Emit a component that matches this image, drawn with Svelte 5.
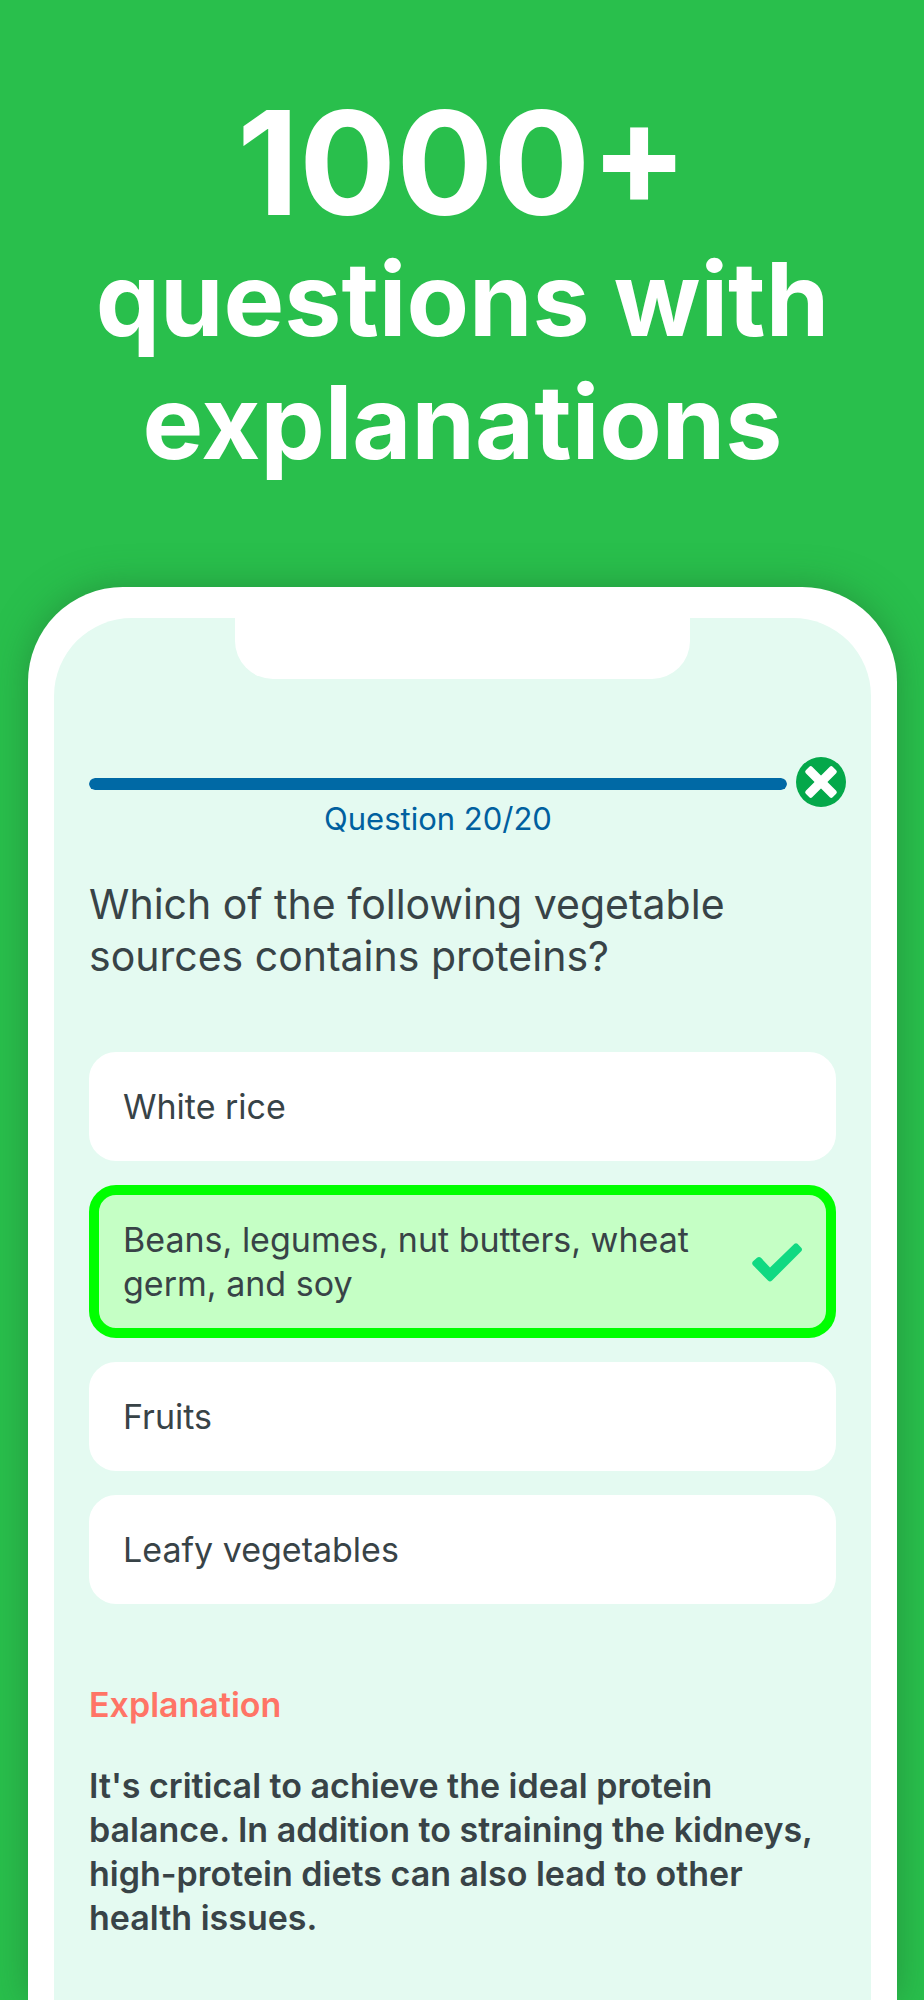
<script>
  const total = 20;
  const current = 20;
  const options = [
    { text: 'White rice', correct: false },
    { text: 'Beans, legumes, nut butters, wheat germ, and soy', correct: true },
    { text: 'Fruits', correct: false },
    { text: 'Leafy vegetables', correct: false },
  ];
  let selected = $state(1);
</script>

<div class="page">
  <h1 class="headline">
    <span class="count">1000+</span>
    <span class="line">questions with</span>
    <span class="line">explanations</span>
  </h1>

  <div class="phone">
    <main class="screen">
      <div class="notch"></div>

      <div class="top">
        <div class="progress">
          <div
            class="track"
            role="progressbar"
            aria-labelledby="progress-label"
            aria-valuemin="0"
            aria-valuemax={total}
            aria-valuenow={current}
          >
            <div class="fill" style="width: {(current / total) * 100}%"></div>
          </div>
          <div class="progress-label" id="progress-label">Question {current}/{total}</div>
        </div>
        <button class="close" type="button" aria-label="Close">
          <svg viewBox="0 0 50 50" aria-hidden="true">
            <circle cx="25" cy="25" r="25" fill="#04a84a" />
            <g fill="#fff">
              <rect x="6" y="20.500" width="38" height="9" rx="2" transform="rotate(45 25 25)" />
              <rect x="6" y="20.500" width="38" height="9" rx="2" transform="rotate(-45 25 25)" />
            </g>
          </svg>
        </button>
      </div>

      <h2 class="question">Which of the following vegetable sources contains proteins?</h2>

      <div class="options">
        {#each options as option, i}
          <button
            type="button"
            class="option"
            class:correct={selected === i && option.correct}
            aria-pressed={selected === i}
            onclick={() => (selected = i)}
          >
            <span class="text">{option.text}</span>
            {#if selected === i && option.correct}
              <svg class="check" viewBox="0 0 50 39" aria-hidden="true">
                <path
                  d="M.8 18.500 L5 14.800 Q7 13.300 9 14.800 L18 24.500 L42.500 .8 Q44 -.3 45.500 .8 L49.500 5 Q50.500 6.500 49.500 8 L20 37.500 Q18 39.500 16 37.500 L.8 22 Q-.5 20.300 .8 18.500 Z"
                  fill="#10d982"
                />
              </svg>
            {/if}
          </button>
        {/each}
      </div>

      <section class="explanation">
        <h3>Explanation</h3>
        <p>
          It's critical to achieve the ideal protein balance. In addition to straining the kidneys,
          high-protein diets can also lead to other health issues.
        </p>
      </section>
    </main>
  </div>
</div>

<style>
  :global(body) {
    background: #29bf4c;
  }

  .page {
    box-sizing: border-box;
    min-height: 100vh;
    display: flex;
    flex-direction: column;
    padding: 88px 27px 0 28px;
    background: #29bf4c;
    color: #384347;
    font-family: Inter, 'Open Sans', sans-serif;
  }

  h1,
  h2,
  h3,
  p {
    margin: 0;
  }

  .headline {
    color: #fff;
    text-align: center;
    font-weight: 700;
  }

  .headline span {
    display: block;
  }

  .headline .count {
    font-size: 144px;
    line-height: 150px;
  }

  .headline .line {
    font-size: 102px;
    line-height: 123px;
  }

  .phone {
    flex: 1;
    display: flex;
    margin-top: 103px;
    padding: 31px 26px 0;
    background: #fff;
    border-radius: 95px 95px 0 0;
    box-shadow: 0 0 36px rgba(34, 110, 50, 0.5);
  }

  .screen {
    flex: 1;
    min-width: 0;
    padding: 0 35px 48px;
    background: #e4faf1;
    border-radius: 78px 78px 0 0;
  }

  .notch {
    width: 61%;
    height: 61px;
    margin: 0 auto;
    background: #fff;
    border-radius: 0 0 38px 38px;
  }

  .top {
    display: flex;
    align-items: flex-start;
    gap: 9px;
    margin: 78px -10px 0 0;
  }

  .progress {
    flex: 1;
    padding-top: 21px;
  }

  .track {
    height: 12px;
    border-radius: 6px;
    background: #c9e4ea;
    overflow: hidden;
  }

  .fill {
    height: 100%;
    border-radius: 6px;
    background: #0069a5;
  }

  .progress-label {
    margin-top: 9px;
    color: #00609f;
    font-size: 31px;
    line-height: 40px;
    text-align: center;
  }

  .close {
    width: 50px;
    height: 50px;
    padding: 0;
    border: 0;
    background: none;
    cursor: pointer;
  }

  .close svg {
    display: block;
  }

  .question {
    margin-top: 39px;
    font-size: 41px;
    font-weight: 400;
    line-height: 52px;
  }

  .options {
    display: flex;
    flex-direction: column;
    gap: 24px;
    margin-top: 70px;
  }

  .option {
    display: flex;
    align-items: center;
    justify-content: space-between;
    gap: 24px;
    padding: 23px 24px 22px;
    border: 10px solid #fff;
    border-radius: 27px;
    background: #fff;
    color: inherit;
    font: inherit;
    font-size: 34px;
    line-height: 44px;
    text-align: left;
    cursor: pointer;
  }

  .option.correct {
    border-color: #00ff00;
    background: #c5ffc5;
  }

  .check {
    flex: none;
    width: 50px;
    height: 39px;
  }

  .explanation {
    margin-top: 79px;
    font-size: 34px;
    line-height: 44px;
    font-weight: 600;
  }

  .explanation h3 {
    color: #ff7466;
    font-size: 34px;
    font-weight: 600;
  }

  .explanation p {
    margin-top: 37px;
  }
</style>
